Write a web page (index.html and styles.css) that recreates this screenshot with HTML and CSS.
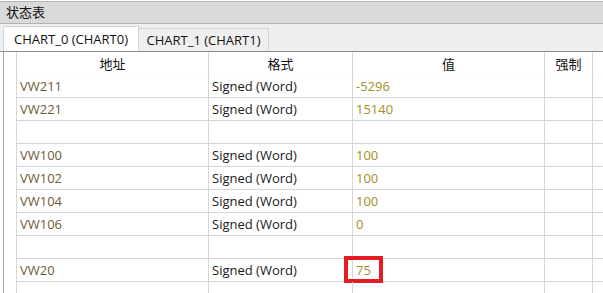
FILE: index.html
```html
<!DOCTYPE html>
<html lang="zh">
<head>
<meta charset="utf-8">
<link rel="stylesheet" href="styles.css">
</head>
<body>
<div class="title">状态表</div>
<div class="tabs">
  <div class="tab active">CHART_0 (CHART0)</div>
  <div class="tab">CHART_1 (CHART1)</div>
</div>
<div class="grid">
  <div class="gut head"></div><div class="c head hc">地址</div><div class="c head hc">格式</div><div class="c head hc">值</div><div class="c head hc">强制</div><div class="c head last"></div>

  <div class="gut"></div><div class="c addr">VW211</div><div class="c fmt">Signed (Word)</div><div class="c val">-5296</div><div class="c"></div><div class="c last"></div>
  <div class="gut"></div><div class="c addr">VW221</div><div class="c fmt">Signed (Word)</div><div class="c val">15140</div><div class="c"></div><div class="c last"></div>
  <div class="gut"></div><div class="c addr"></div><div class="c fmt"></div><div class="c val"></div><div class="c"></div><div class="c last"></div>
  <div class="gut"></div><div class="c addr">VW100</div><div class="c fmt">Signed (Word)</div><div class="c val">100</div><div class="c"></div><div class="c last"></div>
  <div class="gut"></div><div class="c addr">VW102</div><div class="c fmt">Signed (Word)</div><div class="c val">100</div><div class="c"></div><div class="c last"></div>
  <div class="gut"></div><div class="c addr">VW104</div><div class="c fmt">Signed (Word)</div><div class="c val">100</div><div class="c"></div><div class="c last"></div>
  <div class="gut"></div><div class="c addr">VW106</div><div class="c fmt">Signed (Word)</div><div class="c val">0</div><div class="c"></div><div class="c last"></div>
  <div class="gut"></div><div class="c addr"></div><div class="c fmt"></div><div class="c val"></div><div class="c"></div><div class="c last"></div>
  <div class="gut"></div><div class="c addr">VW20</div><div class="c fmt">Signed (Word)</div><div class="c val marked">75<span class="mark"></span></div><div class="c"></div><div class="c last"></div>
  <div class="gut"></div><div class="c addr"></div><div class="c fmt"></div><div class="c val"></div><div class="c"></div><div class="c last"></div>
</div>
</body>
</html>
```
FILE: styles.css
```css
* { box-sizing: border-box; }
html, body { margin: 0; padding: 0; background: #fff; overflow: hidden; }
body {
  width: 603px; height: 293px;
  font-family: "Open Sans", "Noto Sans CJK SC", sans-serif;
  font-size: 13px;
  color: #1a1a1a;
}
.title {
  margin-top: 1px;
  height: 23px;
  background: #d9d9d9;
  border-top: 1px solid #b3b3b3;
  border-bottom: 1px solid #b3b3b3;
  padding-left: 6px;
  font-family: "Noto Sans CJK SC", sans-serif;
  font-size: 13px;
  line-height: 20px;
  color: #111;
}
.tabs {
  height: 28px;
  background: #efefef;
  border-bottom: 1px solid #8e8e8e;
  display: flex;
  align-items: flex-end;
  padding-left: 3px;
}
.tab {
  height: 23px;
  width: 131px;
  border: 1px solid #d4d4d4;
  border-bottom: none;
  margin-left: -1px;
  background: #efefef;
  display: flex;
  align-items: center;
  justify-content: center;
  font-size: 13px;
  color: #111;
}
.tab.active {
  height: 25px;
  width: 136px;
  margin-left: 0;
  background: #fff;
  padding-bottom: 1px;
}
.grid {
  display: grid;
  grid-template-columns: 13px 192px 144px 192px 48px 1fr;
  grid-auto-rows: 23px;
  margin-left: 3px;
  border-left: 1px solid #a6a6a6;
}
.gut { border-right: 1px solid #d6d6d6; }
.c {
  border-right: 1px solid #d6d6d6;
  border-bottom: 1px solid #d6d6d6;
  padding-left: 3px;
  line-height: 22px;
  white-space: nowrap;
  position: relative;
}
.grid > .head { height: 24px; }
.c.head { border-bottom-color: #fafafa; line-height: 24px; }
.hc {
  text-align: center;
  padding-left: 0;
  font-family: "Noto Sans CJK SC", sans-serif;
  font-size: 13px;
  color: #111;
}
.c.last { border-right: none; }
.addr { color: #6f5a36; }
.fmt { color: #1a1a1a; }
.val { color: #a48d28; }
.mark {
  position: absolute;
  left: -9px;
  top: -3px;
  width: 39px;
  height: 27px;
  border: 4px solid #e51c23;
}
```
